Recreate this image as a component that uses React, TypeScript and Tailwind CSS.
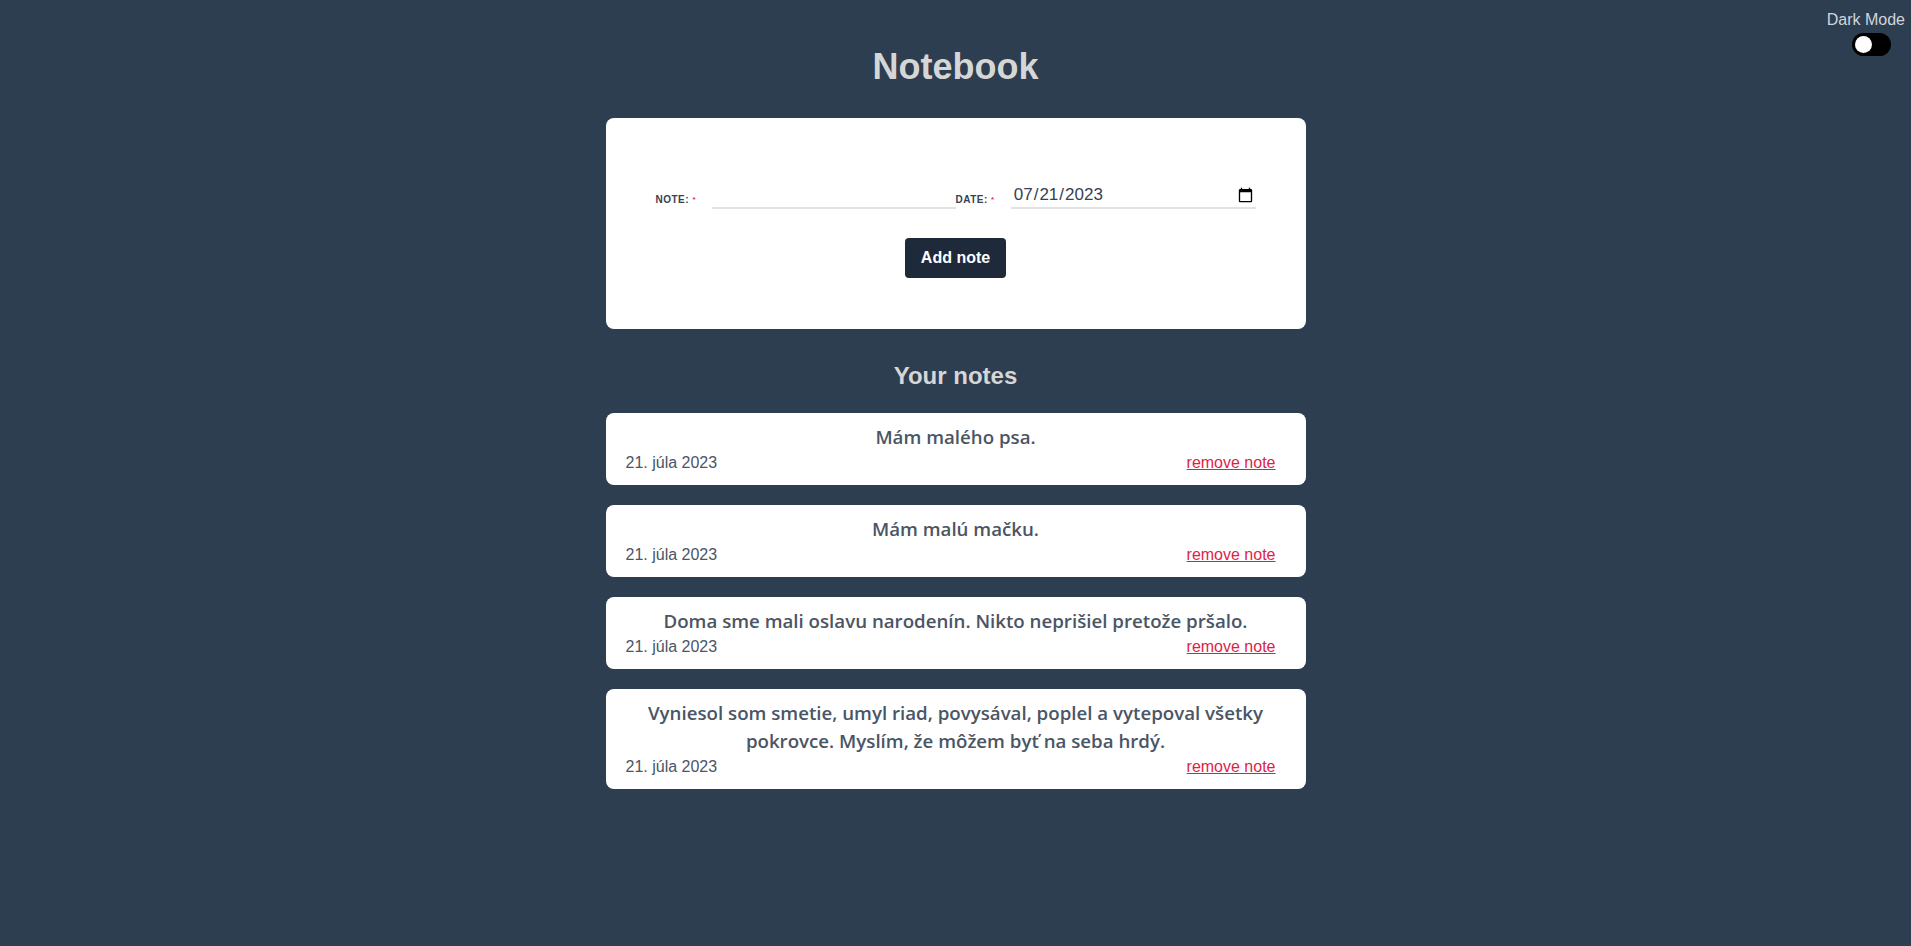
import { useState } from "react";

type Note = { id: number; text: string; date: string };

const notes: Note[] = [
  { id: 1, text: "Mám malého psa.", date: "21. júla 2023" },
  { id: 2, text: "Mám malú mačku.", date: "21. júla 2023" },
  {
    id: 3,
    text: "Doma sme mali oslavu narodenín. Nikto neprišiel pretože pršalo.",
    date: "21. júla 2023",
  },
  {
    id: 4,
    text: "Vyniesol som smetie, umyl riad, povysával, poplel a vytepoval všetky pokrovce. Myslím, že môžem byť na seba hrdý.",
    date: "21. júla 2023",
  },
];

function Field({ label, children }: { label: string; children: React.ReactNode }) {
  return (
    <div className="flex flex-1 items-end gap-4">
      <label className="pb-[3px] text-[10px] font-bold tracking-wider text-gray-700 leading-3 whitespace-nowrap">
        {label}: <span className="text-[8px] align-top text-red-500">*</span>
      </label>
      {children}
    </div>
  );
}

export default function App() {
  const [dark, setDark] = useState(false);

  return (
    <main className="min-h-[946px] w-full bg-[#2c3e50] font-['Liberation_Sans',Arial,sans-serif] relative">
      <div className="absolute top-[8px] right-[6px] flex flex-col items-end gap-[1px]">
        <span className="text-base text-gray-300">Dark Mode</span>
        <button
          onClick={() => setDark(!dark)}
          className="mr-[14px] flex h-[23px] w-[39px] items-center rounded-full bg-black px-[3px]"
        >
          <span className={"h-[17px] w-[17px] rounded-full bg-white " + (dark ? "ml-auto" : "")} />
        </button>
      </div>

      <section className="flex flex-col items-center pt-[47px]">
        <h1 className="text-4xl font-bold text-[#d6d6d6]">Notebook</h1>

        <form className="mt-[31px] flex w-[700px] flex-col items-center rounded-lg bg-white pt-[65px] pb-[51px]">
          <div className="flex w-[600px]">
            <Field label="NOTE">
              <input className="h-[25px] flex-1 border-b-2 border-[#e2e2e2] outline-none" />
            </Field>
            <Field label="DATE">
              <input
                type="date"
                defaultValue="2023-07-21"
                className="h-[26px] flex-1 border-b-2 border-[#e2e2e2] pl-[2px] text-[17px] text-gray-700 outline-none font-['Liberation_Sans',Arial,sans-serif]"
              />
            </Field>
          </div>
          <button
            type="button"
            className="mt-[29px] h-10 rounded bg-gray-800 px-4 text-base font-bold text-white"
          >
            Add note
          </button>
        </form>

        <h2 className="mt-[31px] text-2xl font-bold text-[#d6d6d6]">Your notes</h2>

        <ul className="mt-[21px] flex w-[700px] flex-col gap-5">
          {notes.map((n) => (
            <li key={n.id} className="rounded-lg bg-white pt-[10px] pb-[10px]">
              <p className="px-8 text-center text-[18.7px] leading-7 font-semibold text-gray-600 font-['Open_Sans','Noto_Sans',sans-serif]">
                {n.text}
              </p>
              <div className="flex justify-between pl-5 pr-[30px] text-base text-gray-600">
                <span>{n.date}</span>
                <a href="#" className="text-[#e11d48] underline">
                  remove note
                </a>
              </div>
            </li>
          ))}
        </ul>
      </section>
    </main>
  );
}
